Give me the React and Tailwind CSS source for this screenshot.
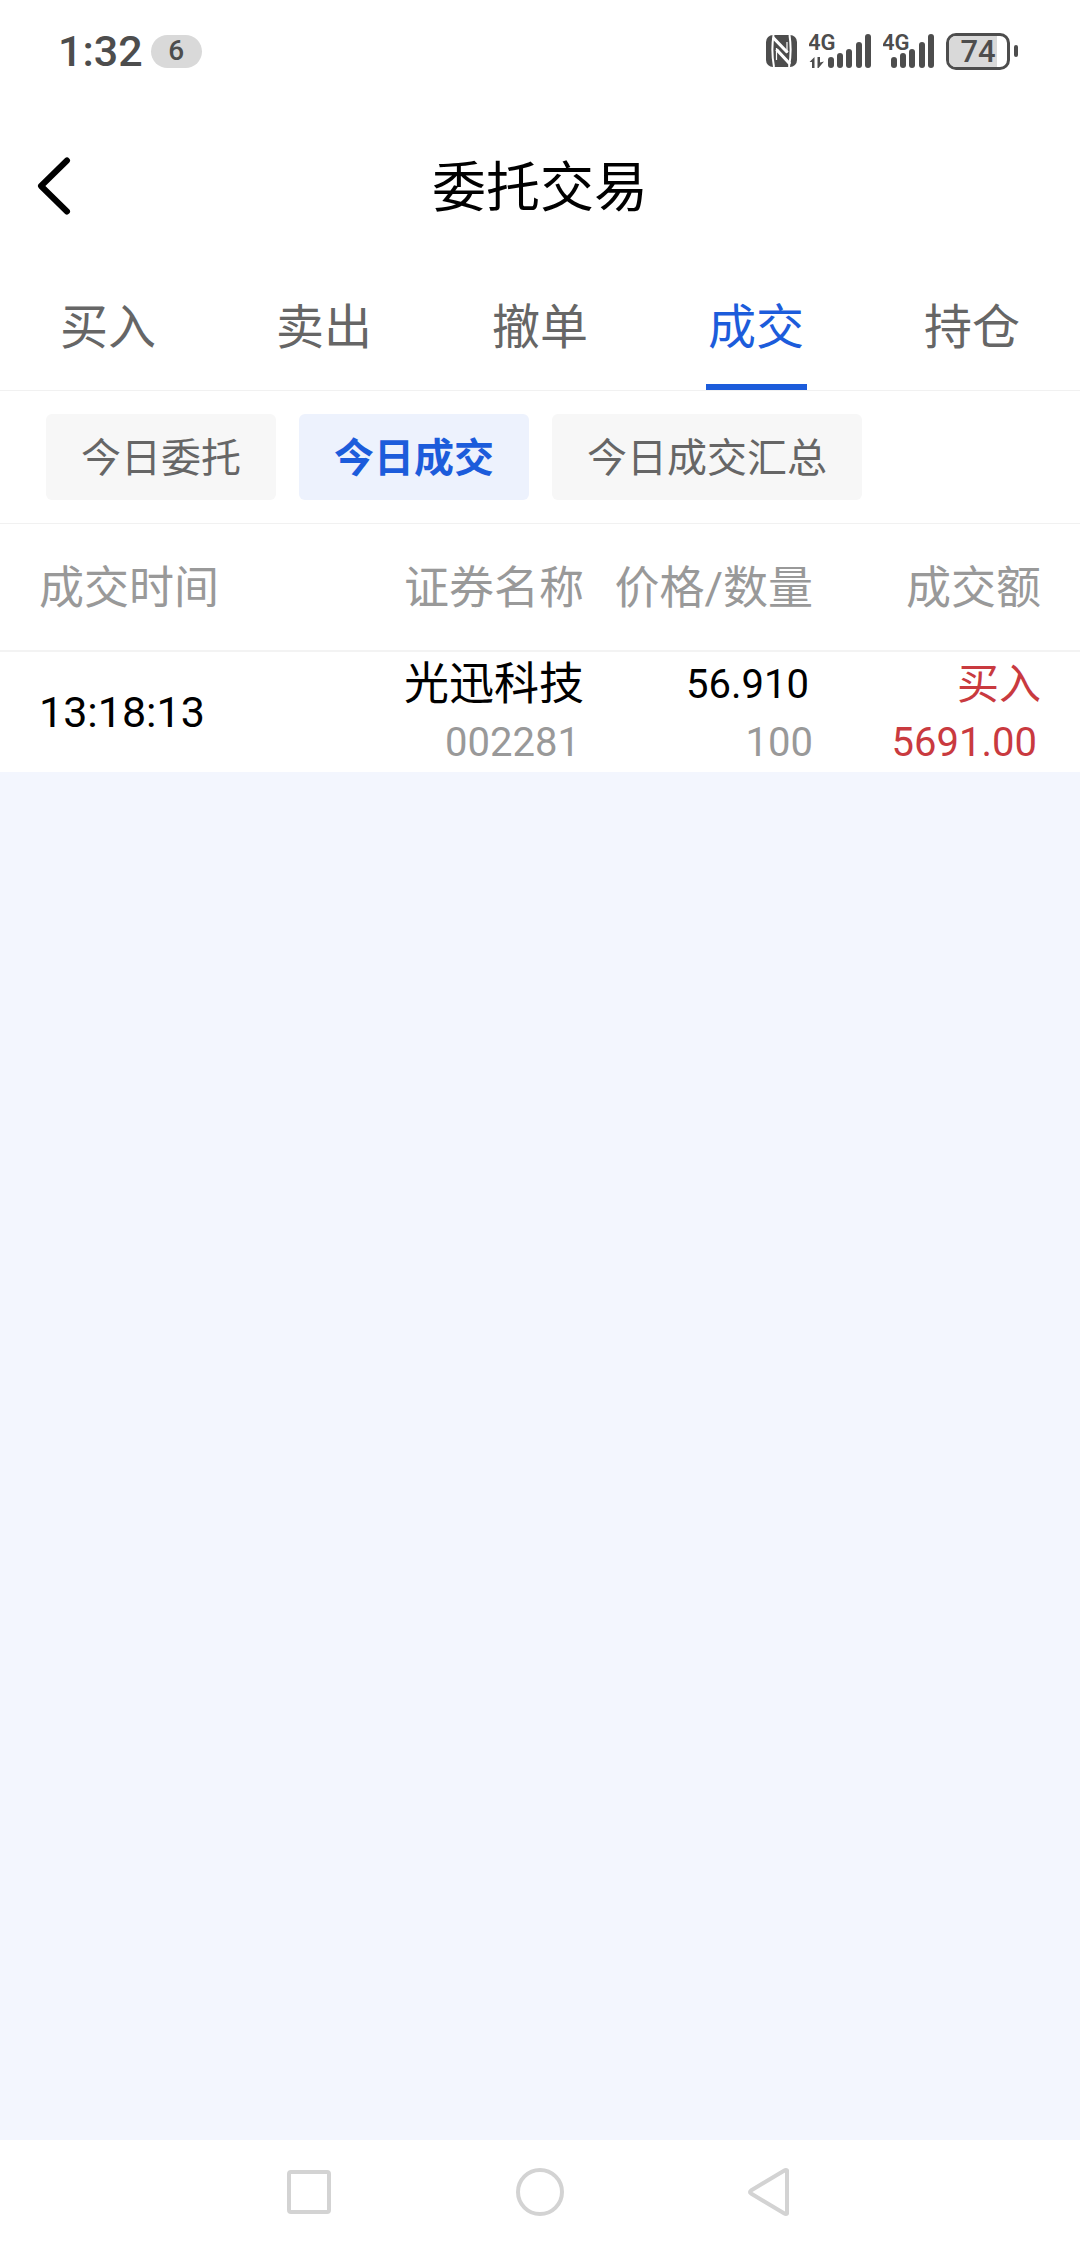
// App.jsx
import React, { useState } from 'react';

const tabs = ["买入", "卖出", "撤单", "成交", "持仓"];

const filters = ["今日委托", "今日成交", "今日成交汇总"];

const deals = [
  { id: 1, time: "13:18:13", name: "光迅科技", code: "002281", price: "56.910", quantity: "100", side: "买入", amount: "5691.00" },
];

// Top of each signal bar, shortest first
const signalBars = [
  { x: 0, y: 23 },
  { x: 9, y: 19 },
  { x: 18, y: 15 },
  { x: 28, y: 8 },
  { x: 37, y: 0 },
];

const Signal = ({ arrows }) => (
  <svg width={arrows ? 62 : 51} height="54" viewBox={arrows ? "0 -10 62 54" : "0 -10 51 54"} fill="#4d4d4d" aria-hidden="true">
    <text x="-1" y="16" fontFamily="Roboto" fontSize="22" fontWeight="600">4G</text>
    {arrows && (
      <path d="M5.5 23V34H3V28H0.5ZM8.5 23H11V28.5L15 27.5L9.5 34H8.5Z" />
    )}
    {signalBars.map((bar) => (
      <rect key={bar.x} x={bar.x + (arrows ? 19 : 8)} y={bar.y} width="6" height={34 - bar.y} rx="3" />
    ))}
  </svg>
);

const StatusBar = () => (
  <div className="flex h-[102px] items-center justify-between pl-[58px] pr-[62px] text-[#4d4d4d]">
    <div className="flex items-center gap-2">
      <span className="text-[43px] leading-[52px] font-medium">1:32</span>
      <span className="flex h-[33px] w-[51px] items-center justify-center rounded-full bg-[#d9d9d9] text-[28px] font-medium">6</span>
    </div>

    <div className="flex items-center">
      {/* NFC */}
      <svg width="31" height="32" viewBox="0 0 31 32" className="mr-3" aria-hidden="true">
        <rect width="31" height="32" rx="7" fill="#4d4d4d" />
        <path d="M7.5 0Q5 16 8 32M23.5 0Q26 16 23 32" stroke="#fff" strokeWidth="2" fill="none" />
        <path d="M7 2.5L21.5 17.5M10.5 14.5L24 29" stroke="#fff" strokeWidth="3.2" fill="none" />
        <path d="M10.5 13V25M21 7V18" stroke="#fff" strokeWidth="1.2" fill="none" />
      </svg>
      <Signal arrows />
      <div className="ml-3">
        <Signal />
      </div>
      {/* Battery */}
      <div className="ml-3 flex items-center gap-1">
        <div className="relative h-[37px] w-[64px] overflow-hidden rounded-[10px] border-3 border-[#4d4d4d]">
          <div className="absolute inset-y-0 left-0 w-[48px] bg-[#d9d9d9]"></div>
          <span className="absolute inset-0 text-center text-[31px] leading-[32px] font-medium">74</span>
        </div>
        <div className="h-[12px] w-[4px] rounded-full bg-[#4d4d4d]"></div>
      </div>
    </div>
  </div>
);

const NavBar = () => (
  <div className="flex h-[104px] items-center justify-center gap-[182px] bg-white">
    <button type="button" aria-label="最近任务">
      <svg width="48" height="48" viewBox="0 0 48 48" fill="none" stroke="#d3d3d3" strokeWidth="4">
        <rect x="3" y="4" width="40" height="40" rx="2" />
      </svg>
    </button>
    <button type="button" aria-label="主屏幕">
      <svg width="48" height="48" viewBox="0 0 48 48" fill="none" stroke="#d3d3d3" strokeWidth="4">
        <circle cx="24" cy="24" r="22" />
      </svg>
    </button>
    <button type="button" aria-label="系统返回">
      <svg width="48" height="48" viewBox="0 0 48 48" fill="none" stroke="#d3d3d3" strokeWidth="4" strokeLinejoin="round">
        <path d="M41 2.5V45.5Q40 46.5 38 45.3L5 25.5Q3 24 5 22.5L38 2.7Q40 1.5 41 2.5Z" />
      </svg>
    </button>
  </div>
);

const App = () => {
  const [activeTab, setActiveTab] = useState("成交");
  const [activeFilter, setActiveFilter] = useState("今日成交");

  return (
    <div className="flex min-h-screen flex-col bg-[#f3f6fe] font-[Roboto,'Noto_Sans_CJK_SC',sans-serif]">
      <div className="bg-white">
        <StatusBar />

        {/* Title */}
        <header className="relative flex h-[168px] items-center justify-center">
          <button type="button" aria-label="返回" className="absolute left-[37px]">
            <svg width="34" height="58" viewBox="0 0 34 58" fill="none" stroke="#000" strokeWidth="6" strokeLinecap="round" strokeLinejoin="round">
              <path d="M30 3.5L4 29L30 54.5" />
            </svg>
          </button>
          <h1 className="pt-1 text-[54px] text-black">委托交易</h1>
        </header>

        {/* Trade tabs */}
        <nav className="grid grid-cols-5 border-b border-[#f1f1f1]">
          {tabs.map((tab) => (
            <button
              key={tab}
              type="button"
              onClick={() => setActiveTab(tab)}
              className={`relative flex h-[120px] items-center justify-center pb-1 text-[48px] ${activeTab === tab ? "text-[#1c5cdb]" : "text-[#666666]"}`}
            >
              {tab}
              {activeTab === tab && (
                <span className="absolute bottom-0 h-[6px] w-[101px] bg-[#1c5cdb]"></span>
              )}
            </button>
          ))}
        </nav>

        {/* Filters */}
        <div className="flex gap-[23px] border-b border-[#f1f1f1] px-[46px] py-[23px]">
          {filters.map((filter) => (
            <button
              key={filter}
              type="button"
              onClick={() => setActiveFilter(filter)}
              className={`h-[86px] rounded-md px-[35px] pt-1 text-[40px] ${activeFilter === filter ? "bg-[#edf2fd] font-bold text-[#1c5cdb]" : "bg-[#f7f7f7] text-[#666666]"}`}
            >
              {filter}
            </button>
          ))}
        </div>

        {/* Deals */}
        <table className="w-full table-fixed border-collapse text-right">
          <thead>
            <tr className="h-[127px] border-b-2 border-[#f3f3f3] text-[45px] text-[#999999]">
              <th className="pt-1 pl-[39px] text-left font-normal">成交时间</th>
              <th className="pt-1 font-normal">证券名称</th>
              <th className="w-[229px] pt-1 font-normal whitespace-nowrap">价格/数量</th>
              <th className="w-[267px] pt-1 pr-[39px] font-normal">成交额</th>
            </tr>
          </thead>
          <tbody>
            {deals.map((deal) => (
              <tr key={deal.id} className="text-[40px] leading-[58px] text-black">
                <td className="pl-[39px] text-left text-[43px]">{deal.time}</td>
                <td className="pt-1">
                  <div className="text-[45px]">{deal.name}</div>
                  <div className="pr-1 text-[#999999]">{deal.code}</div>
                </td>
                <td className="pt-1">
                  <div className="pr-1">{deal.price}</div>
                  <div className="text-[#999999]">{deal.quantity}</div>
                </td>
                <td className="pt-1 pr-[39px] text-[#c93a3f]">
                  <div className="text-[42px]">{deal.side}</div>
                  <div className="pr-1">{deal.amount}</div>
                </td>
              </tr>
            ))}
          </tbody>
        </table>
      </div>

      <main className="flex-1"></main>

      <NavBar />
    </div>
  );
}

export default App;
